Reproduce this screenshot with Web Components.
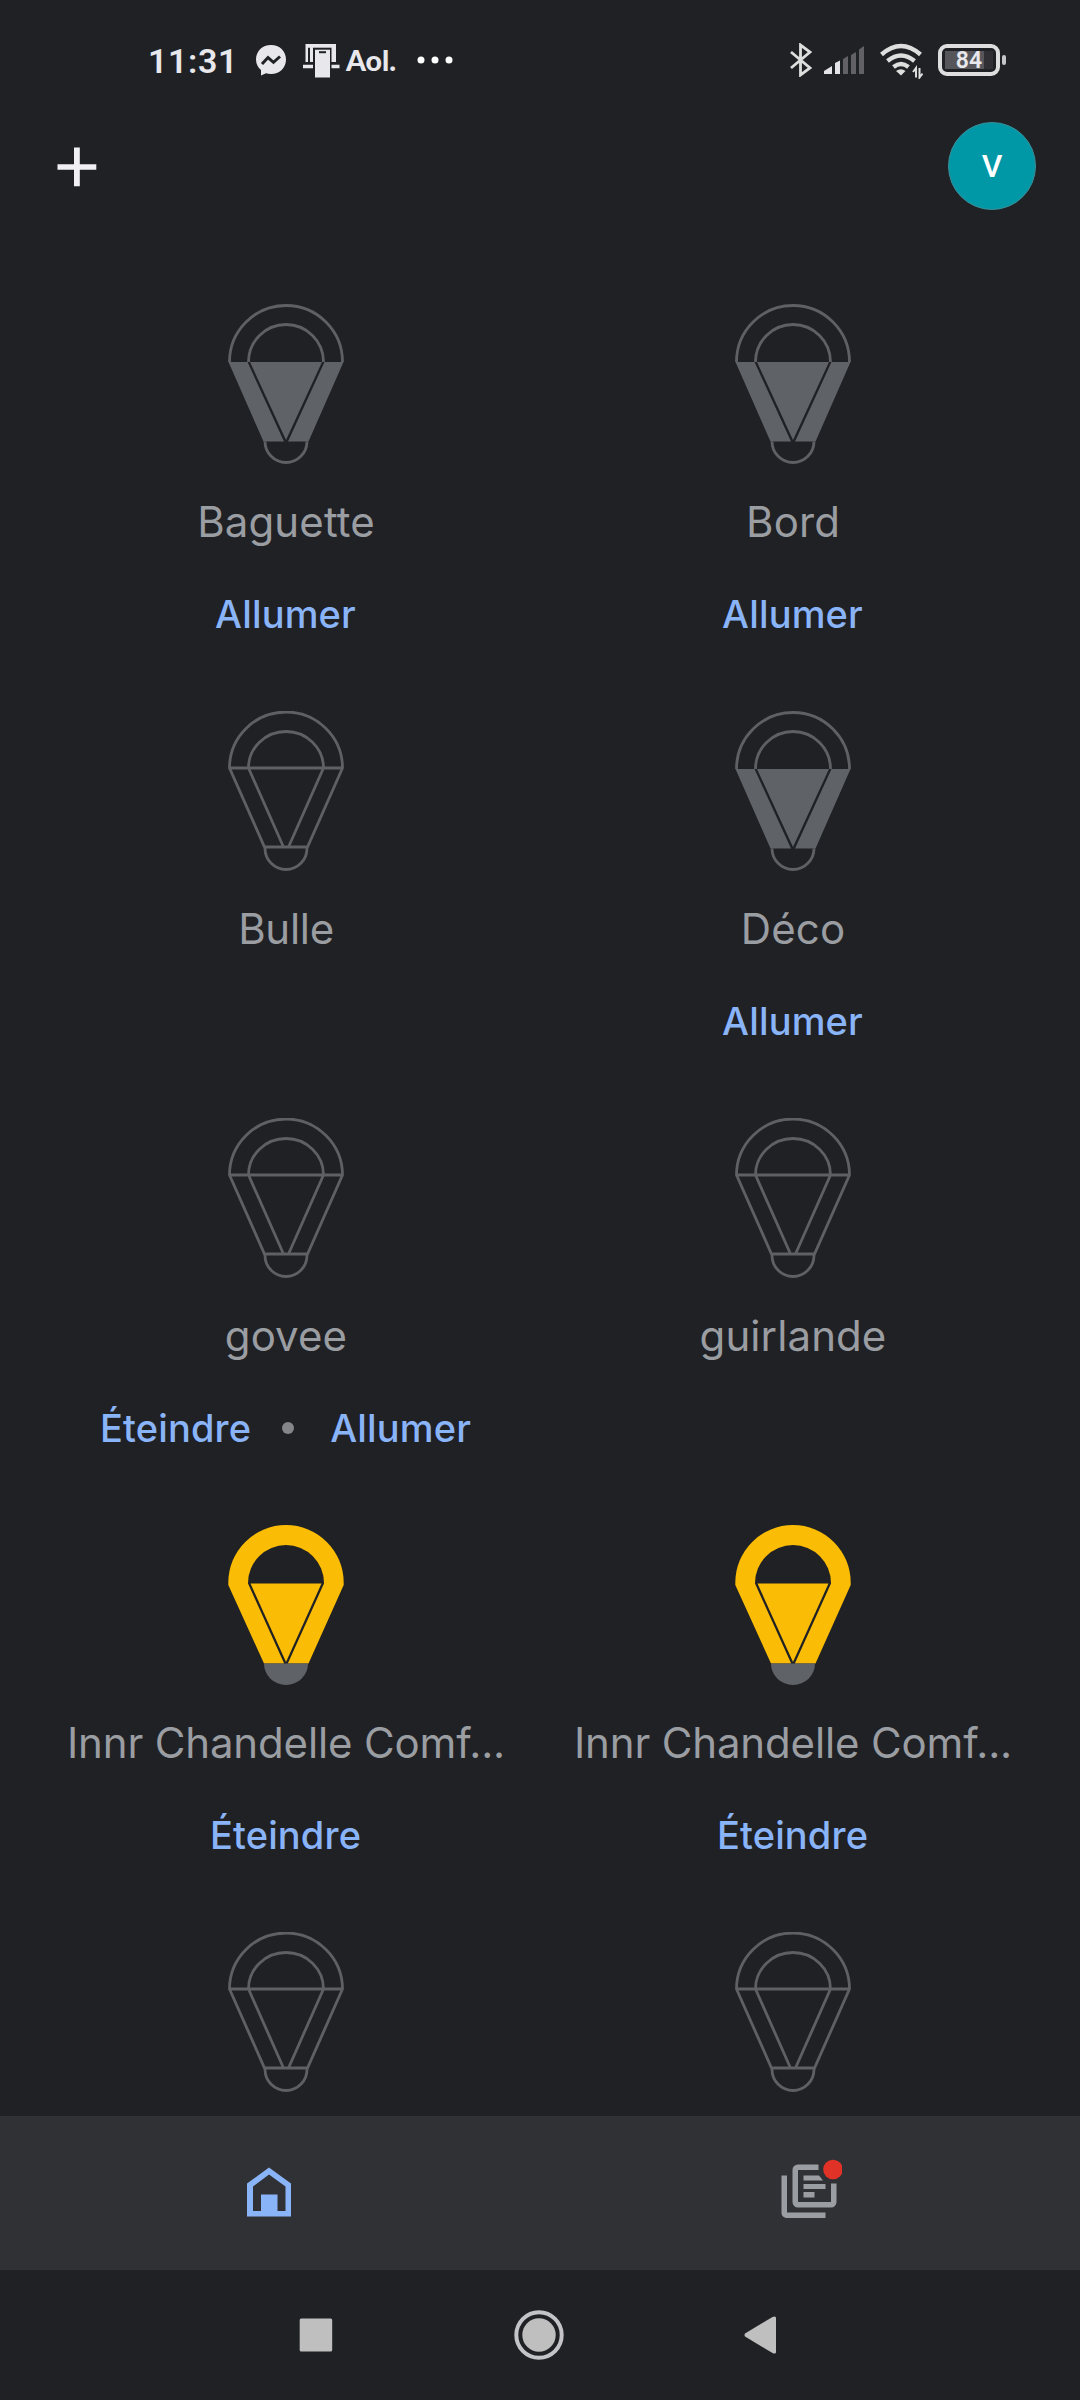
<!DOCTYPE html>
<html lang="fr">
<head>
<meta charset="UTF-8">
<title>Home</title>
<style>
  body {
    margin: 0;
    background: #202125;
    font-family: Inter, "Liberation Sans", sans-serif;
  }
</style>
</head>
<body>
<home-app></home-app>

<script>
class StatusBar extends HTMLElement {
  constructor() {
    super();
    this.attachShadow({ mode: "open" });
  }

  static get styles() {
    return /* css */`
      :host {
        display: block;
        height: 120px;
        color: #e8e8ec;
        font-family: Roboto, sans-serif;
      }

      .bar {
        display: flex;
        justify-content: space-between;
        box-sizing: border-box;
        height: 120px;
        padding: 0 74px 0 148px;
      }

      .left, .right {
        display: flex;
        align-items: center;
        height: 120px;
      }

      svg {
        display: block;
        flex: none;
      }

      .time {
        width: 107px;
        font-size: 34px;
        font-weight: 600;
        letter-spacing: 0.6px;
        line-height: 40px;
        padding-top: 2px;
      }

      .aol {
        width: 71px;
        margin-left: 6px;
        font-family: Lato, sans-serif;
        font-size: 28.5px;
        font-weight: 900;
        line-height: 34px;
      }

      .battery {
        display: flex;
        align-items: center;
        margin-left: 15px;
      }

      .level {
        display: flex;
        align-items: center;
        justify-content: center;
        box-sizing: border-box;
        width: 62px;
        height: 32px;
        border: 4px solid #dededf;
        border-radius: 9px;
        background: linear-gradient(90deg, #56565a 82%, #303034 82%) center / 48px 18px no-repeat;
        font-size: 23px;
        font-weight: 600;
        line-height: 24px;
        padding-top: 2px;
      }

      .nub {
        width: 4px;
        height: 10px;
        margin-left: 2px;
        border-radius: 2px;
        background: #c6c6ca;
      }
    `;
  }

  connectedCallback() {
    this.shadowRoot.innerHTML = /* html */`
    <style>${StatusBar.styles}</style>
    <div class="bar">
      <div class="left">
        <span class="time">11:31</span>
        <svg width="32" height="34" viewBox="0 0 32 34" style="margin-top:2px">
          <path fill="#e8e8ec" d="M16 1C7.500 1 1 7 1 15.500c0 4.500 2 8 5 10.600V31.500l5-2.300c1.500.5 3.200.8 5 .8 8.500 0 15-6 15-14.500S24.500 1 16 1z"/>
          <path fill="none" stroke="#202125" stroke-width="3" d="M7 20l6-6.500 5.500 4.800L25 12.500"/>
        </svg>
        <svg width="37" height="34" viewBox="0 0 37 34" style="margin:2px 0 0 16px">
          <path fill="#e8e8ec" d="M2.500 0H33v18H2.500zM0 20.700h36.500v3.600H0z"/>
          <path fill="#202125" d="M10 3.700h18.500V25H10z"/>
          <path fill="#202125" d="M5 3.700h2V18H5z"/>
          <path fill="#e8e8ec" d="M12 5.700h15V33.500H12z"/>
          <path fill="#202125" d="M16 7.200h7v2h-7z"/>
        </svg>
        <span class="aol">Aol.</span>
        <svg width="36" height="8" viewBox="0 0 36 8" fill="#fff">
          <circle cx="4" cy="4" r="3.500"/><circle cx="18" cy="4" r="3.500"/><circle cx="32" cy="4" r="3.500"/>
        </svg>
      </div>
      <div class="right">
        <svg width="24" height="34" viewBox="0 0 24 34" fill="none" stroke="#dededf" stroke-width="2.800">
          <path d="M2 9l19 16-9.500 7V2l9.500 7L2 25"/>
        </svg>
        <svg width="41" height="28" viewBox="0 0 41 28" style="margin-left:11px">
          <path fill="#e4e4e8" d="M0 28v-3l8-5v8zM11 28V17l5-2.500V28z"/>
          <path fill="#626266" d="M19 28V13l5-3v18zM27 28V9l5-3v22zM35 28V3.500L40 0v28z"/>
        </svg>
        <svg width="43" height="36" viewBox="0 0 43 36" style="margin:2px 0 0 15px" fill="none" stroke="#dededf" stroke-width="4.400">
          <path d="M1.500 11.500q19.500-17 39 0M7.500 18q13.500-11 27 0M13.500 24q7.500-6 15 0"/>
          <path fill="#dededf" stroke="none" d="M16 28q5-3.500 9.500 0L21 32.500z"/>
          <path stroke-width="2" d="M36 34.500V25l-3 4M39.500 25v9.500l3-4"/>
        </svg>
        <div class="battery"><div class="level">84</div><div class="nub"></div></div>
      </div>
    </div>`;
  }
}

class AppBar extends HTMLElement {
  constructor() {
    super();
    this.attachShadow({ mode: "open" });
  }

  static get styles() {
    return /* css */`
      :host {
        display: block;
      }

      .bar {
        display: flex;
        align-items: center;
        justify-content: space-between;
        box-sizing: border-box;
        height: 92px;
        padding: 0 44px 0 57px;
      }

      svg {
        display: block;
        margin-top: 2px;
      }

      .avatar {
        display: flex;
        align-items: center;
        justify-content: center;
        box-sizing: border-box;
        width: 88px;
        height: 88px;
        border: 1px solid #3b9199;
        border-radius: 50%;
        background: #0097a7;
        color: #fff;
        font: 500 32px Roboto, sans-serif;
      }
    `;
  }

  connectedCallback() {
    this.shadowRoot.innerHTML = /* html */`
    <style>${AppBar.styles}</style>
    <div class="bar">
      <svg width="40" height="40" viewBox="0 0 40 40" fill="#f0f0f5">
        <path d="M.5 17.200H17V.5h5.800v16.700h16.500v5.600H22.800v16.500H17V22.800H.5z"/>
      </svg>
      <div class="avatar"><slot></slot></div>
    </div>`;
  }
}

class LightBulb extends HTMLElement {
  constructor() {
    super();
    this.attachShadow({ mode: "open" });
  }

  static get styles() {
    return /* css */`
      :host, svg {
        display: block;
      }
    `;
  }

  // state: on, off or offline
  get shape() {
    switch (this.getAttribute("state")) {
      case "on":
        return `
          <path fill="#fbbc05" fill-rule="evenodd" d="M.3 60V57.700a57.700 57.700 0 0 1 115.400 0V60L80.500 138.500H59.800L96 58.500V58a38 38 0 0 0-76 0v.5l36.200 80H36L.3 60z"/>
          <path fill="#fbbc05" d="M22.500 58.500h71L58 137z"/>
          <path fill="#5f6368" d="M36 138.500h44a22 21.500 0 0 1-44 0z"/>`;
      case "off":
        return `
          <g fill="none" stroke="#5f6064" stroke-width="2.800">
            <path d="M1.500 58a56.500 56.500 0 0 1 113 0M20.500 58a37.500 37.500 0 0 1 75 0M37 137.500a21 21 0 0 0 42 0"/>
          </g>
          <path fill="#5f6368" d="M.5 58H19.500L56 137.500H35.500zM22 58H94L58 136zM115.500 58H96.500L60 137.500H80.500z"/>`;
      default:
        return `
          <g fill="none" stroke="#5f6064" stroke-width="2.800">
            <path d="M1.500 57a56.500 56 0 0 1 113 0L79.500 136H36.500zM20.500 57a37.500 36.500 0 0 1 75 0L60.500 136M20.500 57L55.500 136M1.500 57H114.500M37 136v1.500a21 21 0 0 0 42 0V136"/>
          </g>`;
    }
  }

  connectedCallback() {
    this.shadowRoot.innerHTML = /* html */`
    <style>${LightBulb.styles}</style>
    <svg width="116" height="160" viewBox="0 0 116 160">${this.shape}</svg>`;
  }
}

class DeviceTile extends HTMLElement {
  constructor() {
    super();
    this.attachShadow({ mode: "open" });
  }

  static get styles() {
    return /* css */`
      :host {
        display: flex;
        flex-direction: column;
        align-items: center;
        height: 407px;
      }

      .name {
        height: 56px;
        margin-top: 30px;
        padding-left: 1px;
        color: #9a9da1;
        font-size: 42px;
        letter-spacing: var(--name-spacing, 0.1px);
        line-height: 56px;
        white-space: nowrap;
      }

      .actions {
        display: flex;
        align-items: center;
        height: 56px;
        margin-top: 36px;
        color: #8ab4f8;
        font-size: 38px;
        font-weight: 500;
        letter-spacing: 0.15px;
        line-height: 56px;
      }

      ::slotted(i) {
        width: 12px;
        height: 12px;
        margin: 0 36px 0 31px;
        border-radius: 50%;
        background: #85868a;
      }
    `;
  }

  connectedCallback() {
    this.shadowRoot.innerHTML = /* html */`
    <style>${DeviceTile.styles}</style>
    <light-bulb state="${this.getAttribute("state")}"></light-bulb>
    <div class="name"><slot name="name"></slot></div>
    <div class="actions"><slot></slot></div>`;
  }
}

class BottomTabs extends HTMLElement {
  constructor() {
    super();
    this.attachShadow({ mode: "open" });
  }

  static get styles() {
    return /* css */`
      :host {
        display: block;
        background: #303135;
      }

      .tabs {
        display: grid;
        grid-template-columns: 1fr 1fr;
        place-items: center;
        box-sizing: border-box;
        height: 154px;
        padding-bottom: 4px;
      }

      svg {
        display: block;
      }
    `;
  }

  connectedCallback() {
    this.shadowRoot.innerHTML = /* html */`
    <style>${BottomTabs.styles}</style>
    <div class="tabs">
      <svg width="60" height="60" viewBox="0 0 60 60">
        <path fill="#8ab4f8" fill-rule="evenodd" d="M7 55.500V22.500L29 6.500 51 22.500V55.500zM13 50h8V33.500H37.500V50H45.500V25.500L29 13.500 13 25.500z"/>
      </svg>
      <svg width="64" height="64" viewBox="0 0 64 64" fill="#9a9da1">
        <path d="M3.500 16.500H9V53.500H47.500V59H8.500a5 5 0 0 1-5-5z"/>
        <path d="M40.500 5.500H20a5.500 5.500 0 0 0-5.500 5.500V43a5.500 5.500 0 0 0 5.500 5.500H53a5.500 5.500 0 0 0 5.500-5.500V24.500H53V43H20V11H40.500z"/>
        <path d="M25.500 16.500H41L45 21.500H25.500zM25.500 25H47.500v5H25.500zM25.500 33H36.500v5.500H25.500z"/>
        <circle cx="55" cy="10.500" r="9.800" fill="#e03226"/>
      </svg>
    </div>`;
  }
}

class SystemNav extends HTMLElement {
  constructor() {
    super();
    this.attachShadow({ mode: "open" });
  }

  static get styles() {
    return /* css */`
      :host {
        display: block;
      }

      .keys {
        display: flex;
        align-items: center;
        justify-content: space-between;
        height: 130px;
        padding: 0 303px 0 299px;
      }

      svg {
        display: block;
      }
    `;
  }

  connectedCallback() {
    this.shadowRoot.innerHTML = /* html */`
    <style>${SystemNav.styles}</style>
    <div class="keys">
      <svg width="34" height="34" viewBox="0 0 34 34"><rect x=".7" y=".5" width="32.500" height="33" rx="1.500" fill="#bfbfbf"/></svg>
      <svg width="50" height="50" viewBox="0 0 50 50">
        <circle cx="25" cy="25" r="22.700" fill="none" stroke="#c4c4c8" stroke-width="4"/>
        <circle cx="25" cy="25" r="16.700" fill="#bfbfbf"/>
      </svg>
      <svg width="33" height="38" viewBox="0 0 33 38"><path fill="#bfbfbf" d="M1 17.500Q0 19 1 20.500L28.500 37Q32 38.500 32 36V2Q32-.5 28.500 1z"/></svg>
    </div>`;
  }
}

class HomeApp extends HTMLElement {
  constructor() {
    super();
    this.attachShadow({ mode: "open" });
  }

  static get styles() {
    return /* css */`
      :host {
        display: flex;
        flex-direction: column;
        width: 1080px;
        height: 2400px;
        overflow: hidden;
      }

      .devices {
        display: grid;
        grid-template-columns: 507px 507px;
        grid-auto-rows: 407px;
        flex: 1;
        min-height: 0;
        box-sizing: border-box;
        padding: 92px 34px 0 32px;
        overflow: hidden;
      }

      .tight {
        --name-spacing: -0.3px;
      }

      .long {
        --name-spacing: -0.15px;
      }
    `;
  }

  connectedCallback() {
    this.shadowRoot.innerHTML = /* html */`
    <style>${HomeApp.styles}</style>
    <status-bar></status-bar>
    <app-bar>V</app-bar>
    <div class="devices">
      <device-tile state="off"><span slot="name">Baguette</span><span>Allumer</span></device-tile>
      <device-tile state="off"><span slot="name">Bord</span><span>Allumer</span></device-tile>
      <device-tile state="offline" class="tight"><span slot="name">Bulle</span></device-tile>
      <device-tile state="off"><span slot="name">Déco</span><span>Allumer</span></device-tile>
      <device-tile state="offline"><span slot="name">govee</span><span>Éteindre</span><i></i><span>Allumer</span></device-tile>
      <device-tile state="offline"><span slot="name">guirlande</span></device-tile>
      <device-tile state="on" class="long"><span slot="name">Innr Chandelle Comf...</span><span>Éteindre</span></device-tile>
      <device-tile state="on" class="long"><span slot="name">Innr Chandelle Comf...</span><span>Éteindre</span></device-tile>
      <device-tile state="offline"></device-tile>
      <device-tile state="offline"></device-tile>
    </div>
    <bottom-tabs></bottom-tabs>
    <system-nav></system-nav>`;
  }
}

customElements.define("status-bar", StatusBar);
customElements.define("app-bar", AppBar);
customElements.define("light-bulb", LightBulb);
customElements.define("device-tile", DeviceTile);
customElements.define("bottom-tabs", BottomTabs);
customElements.define("system-nav", SystemNav);
customElements.define("home-app", HomeApp);
</script>
</body>
</html>
